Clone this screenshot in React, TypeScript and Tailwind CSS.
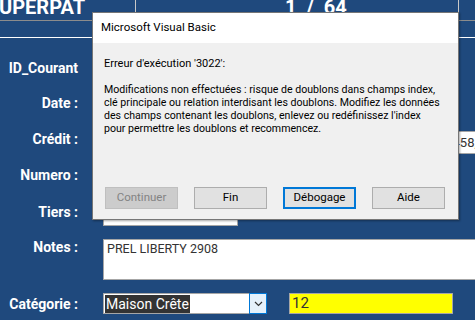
import React from "react";

const label = "w-[80px] shrink-0 text-right pr-[2px] text-white font-bold text-[14px] leading-[16px]";
const field = "bg-white border border-[#a6a6a6]";

function Row({ text, top, children, center }: { text: string; top: string; children?: React.ReactNode; center?: boolean }) {
  return (
    <div className={`flex ${center ? "items-center" : "items-start"} ${top}`}>
      <div className={label}>{text}</div>
      <div className="ml-[23px] flex">{children}</div>
    </div>
  );
}

export default function App() {
  return (
    <div className="relative w-[475px] h-[320px] overflow-hidden bg-[#1f497d] font-['Roboto',sans-serif]">
      {/* header */}
      <div className="h-[20px] flex">
        <div className="w-[135px] h-full overflow-hidden">
          <div className="text-white font-bold text-[20px] leading-none -mt-[3px] -ml-[1px] whitespace-nowrap">UPERPAT</div>
        </div>
        <div className="w-[324px] h-[20px] border-l border-r border-[#c8c8c8] overflow-hidden">
          <div className="pl-[149px] text-white font-bold text-[20px] leading-none -mt-[3px] whitespace-pre">1  /  64</div>
        </div>
        <div className="flex-1" />
      </div>
      <div className="h-px bg-[#8c8c8c]" />
      <div className="h-[16px]" />
      <div className="h-px bg-white" />

      {/* form */}
      <div className="flex flex-col">
        <Row text="ID_Courant" top="mt-[22px]">
          <div className={`${field} w-[120px] h-[22px]`} />
        </Row>
        <Row text="Date :" top="mt-[13px]">
          <div className={`${field} w-[120px] h-[22px]`} />
        </Row>
        <Row text="Crédit :" top="mt-[14px]">
          <div className={`${field} w-[150px] h-[23px]`} />
          <div className={`${field} ml-[185px] w-[120px] h-[23px] pl-[3px] flex items-center text-[13px] text-[#333] whitespace-pre`}>1 458,00 €</div>
        </Row>
        <Row text="Numero :" top="mt-[13px]">
          <div className={`${field} w-[120px] h-[22px]`} />
        </Row>
        <Row text="Tiers :" top="mt-[15px]">
          <div className={`${field} w-[135px] h-[22px]`} />
        </Row>
        <Row text="Notes :" top="mt-[13px]">
          <div className={`${field} w-[400px] h-[41px] pl-[3px] pt-[1px] text-[12.5px] leading-[16px] text-[#333]`}>PREL LIBERTY 2908</div>
        </Row>
        <Row text="Catégorie :" top="mt-[13px]" center>
          <div className={`${field} w-[164px] h-[21px] flex items-center pl-px`}>
            <span className="bg-[#333333] text-white text-[14px] leading-[18px] px-[1px]">Maison Crête</span>
            <div className="ml-auto w-[18px] h-[21px] -mr-px bg-[#e5f1fb] border border-[#0078d7] flex items-center justify-center">
              <svg width="9" height="6" viewBox="0 0 9 6" fill="none">
                <path d="M1 1 L4.5 4.5 L8 1" stroke="#333" strokeWidth="1.2" />
              </svg>
            </div>
          </div>
          <div className="ml-[22px] w-[164px] h-[21px] bg-[#ffff00] border border-[#a6a6a6] pl-[2px] flex items-center text-[15px] text-[#333]">12</div>
        </Row>
      </div>

      {/* dialog */}
      <div className="absolute left-[92px] top-[12px] w-[367px] h-[208px] border border-[#767676] bg-[#f0f0f0] flex flex-col shadow-[1px_1px_2px_rgba(0,0,0,0.35)]">
        <div className="h-[30px] bg-white pl-[8px] flex items-center text-[11.5px] text-black">Microsoft Visual Basic</div>
        <div className="pl-[11px] pt-[14px] text-[10.6px] leading-[13px] text-black whitespace-nowrap">
          <div className="text-[11px]">Erreur d'exécution '3022':</div>
          <div className="mt-[13px]">
            Modifications non effectuées : risque de doublons dans champs index,<br />
            clé principale ou relation interdisant les doublons. Modifiez les données<br />
            des champs contenant les doublons, enlevez ou redéfinissez l'index<br />
            pour permettre les doublons et recommencez.
          </div>
        </div>
        <div className="mt-auto mb-[10px] ml-[12px] flex gap-[16px] text-[11.5px]">
          <div className="w-[73px] h-[22px] bg-[#cccccc] border border-[#bfbfbf] text-[#838383] flex items-center justify-center">Continuer</div>
          <div className="w-[73px] h-[22px] bg-[#e1e1e1] border border-[#adadad] text-black flex items-center justify-center">Fin</div>
          <div className="w-[73px] h-[22px] bg-[#e1e1e1] border-2 border-[#0078d7] text-black flex items-center justify-center">Débogage</div>
          <div className="w-[73px] h-[22px] bg-[#e1e1e1] border border-[#adadad] text-black flex items-center justify-center">Aide</div>
        </div>
      </div>
    </div>
  );
}
